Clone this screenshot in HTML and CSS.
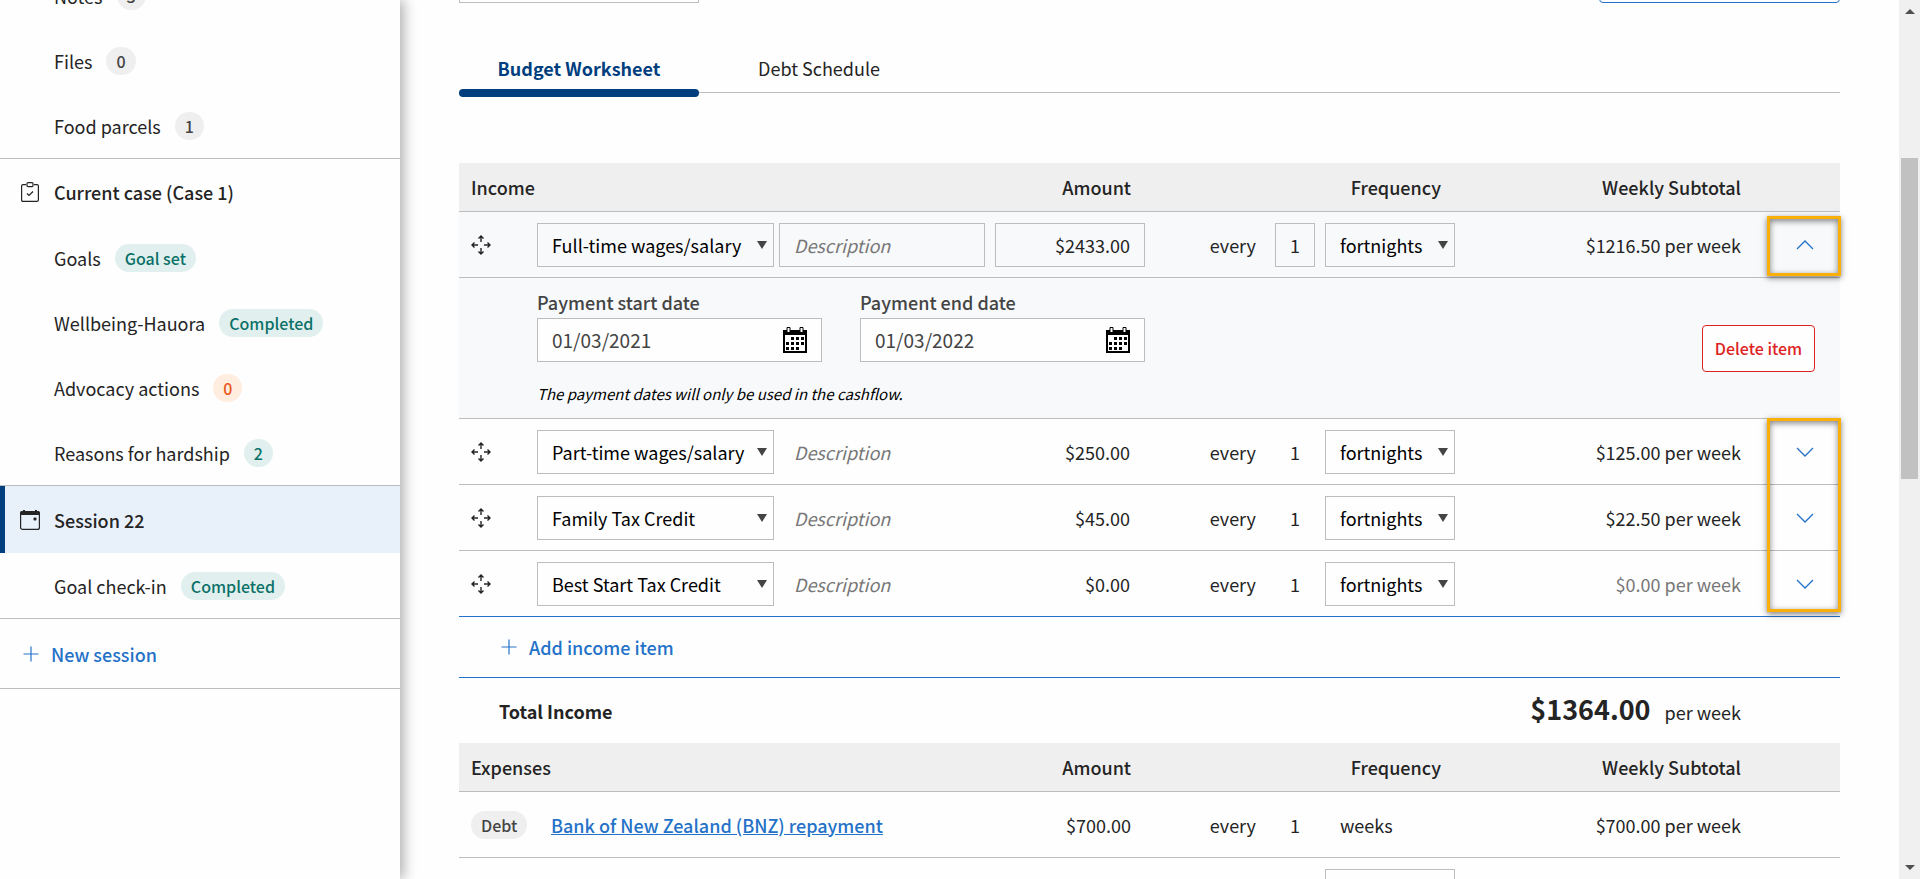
FILE: index.html
```html
<!DOCTYPE html>
<html lang="en">
<head>
    <meta charset="utf-8">
    <title>Budget Worksheet</title>
    <link rel="stylesheet" href="styles.css">
</head>
<body>
    <!-- shared icons -->
    <svg class="sprite" aria-hidden="true">
        <symbol id="move" viewBox="0 0 20 20">
            <path d="M10 7V1M7.500 3.500L10 1l2.500 2.500M10 13v6M7.500 16.500L10 19l2.500-2.500M7 10H1M3.500 7.500L1 10l2.500 2.500M13 10h6M16.500 7.500L19 10l-2.500 2.500" fill="none" stroke="currentColor" stroke-width="1.400"/>
        </symbol>
        <symbol id="plus" viewBox="0 0 16 16">
            <path d="M8 .5v15M.5 8h15" fill="none" stroke="currentColor" stroke-width="1.200"/>
        </symbol>
        <symbol id="down" viewBox="0 0 18 10">
            <path d="M1 1l8 8 8-8" fill="none" stroke="currentColor" stroke-width="1.300"/>
        </symbol>
        <symbol id="up" viewBox="0 0 18 10">
            <path d="M1 9l8-8 8 8" fill="none" stroke="currentColor" stroke-width="1.300"/>
        </symbol>
        <symbol id="calendar" viewBox="0 0 24 26">
            <path d="M1 4h22v21H1z" fill="#fff" stroke="#000" stroke-width="2"/>
            <path d="M0 3h24v5H0z"/>
            <path d="M4 .5h3v5H4zM17 .5h3v5h-3z" fill="#fff" stroke="#000"/>
            <path d="M8 10h3v3H8zM13 10h3v3h-3zM18 10h3v3h-3zM3 15h3v3H3zM8 15h3v3H8zM13 15h3v3h-3zM18 15h3v3h-3zM3 20h3v3H3zM8 20h3v3H8zM13 20h3v3h-3z"/>
        </symbol>
    </svg>

    <div class="page">
        <nav class="sidebar">
            <div class="section first">
                <a class="item" href="#">Notes <span class="badge">3</span></a>
                <a class="item" href="#">Files <span class="badge">0</span></a>
                <a class="item" href="#">Food parcels <span class="badge">1</span></a>
            </div>
            <div class="section">
                <a class="title" href="#">
                    <svg class="title-icon" viewBox="0 0 20 20" fill="none" stroke="currentColor" stroke-width="1.200">
                        <path d="M6 2.600H3A1.400 1.400 0 0 0 1.600 4v14A1.400 1.400 0 0 0 3 19.400h14a1.400 1.400 0 0 0 1.400-1.400V4A1.400 1.400 0 0 0 17 2.600h-3"/>
                        <rect x="7" y=".6" width="6" height="4" rx="1"/>
                        <path d="M7 11.500l2 2 4-4"/>
                    </svg>
                    Current case (Case 1)
                </a>
                <a class="item" href="#">Goals <span class="badge green">Goal set</span></a>
                <a class="item" href="#">Wellbeing-Hauora <span class="badge green">Completed</span></a>
                <a class="item" href="#">Advocacy actions <span class="badge orange">0</span></a>
                <a class="item" href="#">Reasons for hardship <span class="badge green">2</span></a>
            </div>
            <div class="section">
                <a class="title active" href="#">
                    <svg class="title-icon" viewBox="0 0 20 20">
                        <rect x=".6" y="1.600" width="18.800" height="17.800" rx="2" fill="none" stroke="currentColor" stroke-width="1.200"/>
                        <path d="M0 5V3a2 2 0 0 1 2-2h1V0h2v1h10V0h2v1h1a2 2 0 0 1 2 2v2z" fill="currentColor"/>
                        <rect x="13.500" y="7.500" width="3" height="3" rx="1" fill="currentColor"/>
                    </svg>
                    Session 22
                </a>
                <a class="item" href="#">Goal check-in <span class="badge green">Completed</span></a>
            </div>
            <div class="section last">
                <button class="add new-session"><svg class="plus"><use href="#plus"/></svg>New session</button>
            </div>
        </nav>

        <main class="main">
            <div class="top-bar">
                <input class="top-input" type="text" aria-label="Worksheet name">
                <button class="top-button" aria-label="Worksheet action"></button>
            </div>

            <div class="tabs">
                <a class="tab current" href="#">Budget Worksheet</a>
                <a class="tab" href="#">Debt Schedule</a>
            </div>

            <table class="budget">
                <colgroup>
                    <col class="col-drag">
                    <col>
                    <col class="col-amount">
                    <col class="col-frequency">
                    <col class="col-subtotal">
                    <col class="col-toggle">
                </colgroup>
                <thead>
                    <tr>
                        <th class="name" colspan="2">Income</th>
                        <th>Amount</th>
                        <th>Frequency</th>
                        <th class="subtotal">Weekly Subtotal</th>
                        <th></th>
                    </tr>
                </thead>
                <tbody>
                    <tr class="open">
                        <td class="drag"><svg class="move"><use href="#move"/></svg></td>
                        <td>
                            <div class="fields">
                                <select class="type" aria-label="Income type"><option>Full-time wages/salary</option></select>
                                <input class="description" type="text" placeholder="Description" aria-label="Description">
                            </div>
                        </td>
                        <td><input class="amount" type="text" value="$2433.00" aria-label="Amount"></td>
                        <td>
                            <div class="frequency">
                                <span>every</span>
                                <input class="count" type="text" value="1" aria-label="Every">
                                <select class="period" aria-label="Frequency"><option>fortnights</option></select>
                            </div>
                        </td>
                        <td class="subtotal">$1216.50 per week</td>
                        <td class="toggle">
                            <button class="chevron" aria-label="Collapse"><svg><use href="#up"/></svg></button>
                            <div class="highlight"></div>
                        </td>
                    </tr>
                    <tr class="open details">
                        <td></td>
                        <td colspan="5">
                            <div class="detail-row">
                                <div>
                                    <div class="dates">
                                        <div class="date">
                                            <label for="start">Payment start date</label>
                                            <div class="date-box">
                                                <input id="start" type="text" value="01/03/2021">
                                                <button aria-label="Pick start date"><svg><use href="#calendar"/></svg></button>
                                            </div>
                                        </div>
                                        <div class="date">
                                            <label for="end">Payment end date</label>
                                            <div class="date-box">
                                                <input id="end" type="text" value="01/03/2022">
                                                <button aria-label="Pick end date"><svg><use href="#calendar"/></svg></button>
                                            </div>
                                        </div>
                                    </div>
                                    <p class="hint">The payment dates will only be used in the cashflow.</p>
                                </div>
                                <button class="delete">Delete item</button>
                            </div>
                        </td>
                    </tr>
                    <tr>
                        <td class="drag"><svg class="move"><use href="#move"/></svg></td>
                        <td>
                            <div class="fields">
                                <select class="type" aria-label="Income type"><option>Part-time wages/salary</option></select>
                                <input class="description" type="text" placeholder="Description" aria-label="Description">
                            </div>
                        </td>
                        <td><input class="amount" type="text" value="$250.00" aria-label="Amount"></td>
                        <td>
                            <div class="frequency">
                                <span>every</span>
                                <input class="count" type="text" value="1" aria-label="Every">
                                <select class="period" aria-label="Frequency"><option>fortnights</option></select>
                            </div>
                        </td>
                        <td class="subtotal">$125.00 per week</td>
                        <td class="toggle">
                            <button class="chevron" aria-label="Expand"><svg><use href="#down"/></svg></button>
                            <div class="highlight three-rows"></div>
                        </td>
                    </tr>
                    <tr>
                        <td class="drag"><svg class="move"><use href="#move"/></svg></td>
                        <td>
                            <div class="fields">
                                <select class="type" aria-label="Income type"><option>Family Tax Credit</option></select>
                                <input class="description" type="text" placeholder="Description" aria-label="Description">
                            </div>
                        </td>
                        <td><input class="amount" type="text" value="$45.00" aria-label="Amount"></td>
                        <td>
                            <div class="frequency">
                                <span>every</span>
                                <input class="count" type="text" value="1" aria-label="Every">
                                <select class="period" aria-label="Frequency"><option>fortnights</option></select>
                            </div>
                        </td>
                        <td class="subtotal">$22.50 per week</td>
                        <td class="toggle"><button class="chevron" aria-label="Expand"><svg><use href="#down"/></svg></button></td>
                    </tr>
                    <tr class="last-item">
                        <td class="drag"><svg class="move"><use href="#move"/></svg></td>
                        <td>
                            <div class="fields">
                                <select class="type" aria-label="Income type"><option>Best Start Tax Credit</option></select>
                                <input class="description" type="text" placeholder="Description" aria-label="Description">
                            </div>
                        </td>
                        <td><input class="amount" type="text" value="$0.00" aria-label="Amount"></td>
                        <td>
                            <div class="frequency">
                                <span>every</span>
                                <input class="count" type="text" value="1" aria-label="Every">
                                <select class="period" aria-label="Frequency"><option>fortnights</option></select>
                            </div>
                        </td>
                        <td class="subtotal zero">$0.00 per week</td>
                        <td class="toggle"><button class="chevron" aria-label="Expand"><svg><use href="#down"/></svg></button></td>
                    </tr>
                    <tr class="add-row">
                        <td colspan="6"><button class="add"><svg class="plus"><use href="#plus"/></svg>Add income item</button></td>
                    </tr>
                    <tr class="total">
                        <td class="total-name" colspan="2">Total Income</td>
                        <td class="subtotal" colspan="3"><strong>$1364.00</strong> per week</td>
                        <td></td>
                    </tr>
                </tbody>
                <thead>
                    <tr>
                        <th class="name" colspan="2">Expenses</th>
                        <th>Amount</th>
                        <th>Frequency</th>
                        <th class="subtotal">Weekly Subtotal</th>
                        <th></th>
                    </tr>
                </thead>
                <tbody>
                    <tr>
                        <td class="drag"><span class="badge">Debt</span></td>
                        <td><a class="debt-link" href="#">Bank of New Zealand (BNZ) repayment</a></td>
                        <td class="amount-text">$700.00</td>
                        <td>
                            <div class="frequency">
                                <span>every</span>
                                <span class="count-text">1</span>
                                <span class="period-text">weeks</span>
                            </div>
                        </td>
                        <td class="subtotal">$700.00 per week</td>
                        <td></td>
                    </tr>
                    <tr>
                        <td colspan="3"></td>
                        <td>
                            <div class="frequency">
                                <select class="period" aria-label="Frequency"><option>weeks</option></select>
                            </div>
                        </td>
                        <td colspan="2"></td>
                    </tr>
                </tbody>
            </table>
        </main>

        <div class="scrollbar">
            <div class="arrow arrow-up"></div>
            <div class="thumb"></div>
            <div class="arrow arrow-down"></div>
        </div>
    </div>
</body>
</html>
```

FILE: styles.css
```css
* {
    box-sizing: border-box;
}

body {
    margin: 0;
    background: #fefefe;
    color: #242424;
    font-family: "Noto Sans CJK SC", "Noto Sans", sans-serif;
    font-size: 18px;
    line-height: 28px;
}

a {
    color: inherit;
    text-decoration: none;
}

input,
select,
button {
    margin: 0;
    padding: 0;
    border: none;
    background: transparent;
    color: inherit;
    font: inherit;
}

button {
    cursor: pointer;
}

.sprite {
    display: none;
}

.page {
    display: grid;
    grid-template-columns: 400px 1fr 21px;
    height: 100vh;
    overflow: hidden;
}

/* Sidebar */
.sidebar {
    position: relative;
    z-index: 1;
    background: #fefefe;
    box-shadow: 4px 0 12px rgba(0, 0, 0, 0.3);
}

.section {
    border-top: 1px solid #bdbdbd;
}

.first {
    margin-top: -37px;
    border-top: none;
}

.last {
    border-bottom: 1px solid #bdbdbd;
}

.item {
    display: flex;
    align-items: center;
    gap: 14px;
    height: 65px;
    padding-left: 54px;
}

.title {
    display: flex;
    align-items: center;
    gap: 14px;
    height: 66px;
    padding-left: 20px;
    font-weight: 500;
}

.title-icon {
    width: 20px;
    height: 20px;
}

.active {
    height: 67px;
    padding-left: 15px;
    border-left: 5px solid #003e7e;
    background: #e8f0fa;
}

.badge {
    display: inline-block;
    min-width: 28px;
    padding: 0 10px;
    border-radius: 14px;
    background: #efefef;
    color: #444;
    font-size: 16px;
    font-weight: 500;
    text-align: center;
}

.green {
    background: #e1f0ee;
    color: #0b7068;
}

.orange {
    background: #ffede0;
    color: #e8571c;
}

.add {
    display: flex;
    align-items: center;
    gap: 12px;
    color: #2472c8;
    font-weight: 500;
}

.plus {
    width: 16px;
    height: 16px;
}

.new-session {
    width: 100%;
    height: 69px;
    padding-left: 23px;
}

/* Main */
.main {
    padding: 0 59px;
    overflow: hidden;
}

.top-bar {
    display: flex;
    justify-content: space-between;
    height: 44px;
    margin-top: -41px;
}

.top-input {
    width: 240px;
    border: 1px solid #bdbdbd;
}

.top-button {
    width: 241px;
    border: 1px solid #2472c8;
    border-radius: 4px;
}

.tabs {
    display: flex;
    height: 90px;
    margin-bottom: 70px;
    border-bottom: 1px solid #bdbdbd;
}

.tab {
    position: relative;
    width: 240px;
    padding-top: 51px;
    text-align: center;
}

.current {
    color: #003e7e;
    font-weight: 700;
}

.current::after {
    content: "";
    position: absolute;
    left: 0;
    right: 0;
    bottom: -5px;
    height: 8px;
    border-radius: 4px;
    background: #003e7e;
}

.budget {
    width: 100%;
    table-layout: fixed;
    border-collapse: separate;
    border-spacing: 0;
}

.col-drag {
    width: 78px;
}

.col-amount {
    width: 150px;
}

.col-frequency {
    width: 310px;
}

.col-subtotal {
    width: 286px;
}

.col-toggle {
    width: 99px;
}

th {
    height: 49px;
    padding: 0 14px;
    border-bottom: 1px solid #bdbdbd;
    background: #efefef;
    font-weight: 500;
    text-align: right;
}

.name {
    padding-left: 12px;
    text-align: left;
}

td {
    height: 66px;
    padding: 0;
    border-bottom: 1px solid #bdbdbd;
}

.subtotal {
    padding: 0;
    text-align: right;
}

.zero {
    color: #777;
}

.open td {
    background: #f7f9fb;
}

.drag {
    padding-left: 12px;
}

.move {
    display: block;
    width: 20px;
    height: 20px;
}

.fields {
    display: flex;
    gap: 5px;
    padding-right: 10px;
}

select {
    height: 44px;
    padding-left: 14px;
    border: 1px solid #bdbdbd;
    color: #000;
    appearance: none;
    background: url("data:image/svg+xml,%3Csvg xmlns='http://www.w3.org/2000/svg' width='10' height='8'%3E%3Cpath d='M0 0h10L5 8z' fill='%23444'/%3E%3C/svg%3E") no-repeat right 6px center;
}

.type {
    width: 237px;
}

.description,
.amount,
.count {
    height: 44px;
    border: 1px solid transparent;
}

.open .description,
.open .amount,
.open .count {
    border-color: #bdbdbd;
}

.description {
    flex: 1;
    min-width: 0;
    padding-left: 14px;
}

.description::placeholder {
    color: #777;
    font-style: italic;
}

.amount {
    width: 100%;
    padding-right: 14px;
    text-align: right;
}

.amount-text {
    padding-right: 14px;
    text-align: right;
}

.frequency {
    display: flex;
    align-items: center;
    justify-content: flex-end;
    gap: 10px;
}

.frequency span:first-child {
    margin-right: 9px;
}

.count,
.count-text {
    width: 40px;
    text-align: center;
}

.period,
.period-text {
    width: 130px;
}

.period-text {
    padding-left: 15px;
}

.toggle {
    position: relative;
}

.chevron {
    display: flex;
    align-items: center;
    justify-content: center;
    width: 44px;
    height: 44px;
    margin: 0 13px 0 auto;
    color: #2472c8;
}

.chevron svg {
    width: 18px;
    height: 10px;
}

.highlight {
    position: absolute;
    z-index: 1;
    top: 4px;
    right: -1px;
    width: 74px;
    height: 60px;
    border: 3px solid #f9ae08;
    box-shadow: 0 2px 6px rgba(0, 0, 0, 0.5), inset 0 2px 6px rgba(0, 0, 0, 0.5);
    pointer-events: none;
}

.three-rows {
    top: -1px;
    height: 194px;
}

/* Expanded item */
.details td {
    height: 141px;
}

.detail-row {
    display: flex;
    align-items: center;
    justify-content: space-between;
    padding-right: 25px;
}

.dates {
    display: flex;
    gap: 38px;
}

.date {
    width: 285px;
}

.date label {
    display: block;
    margin-bottom: 2px;
    color: #444;
    font-weight: 500;
}

.date-box {
    display: flex;
    align-items: center;
    height: 44px;
    padding: 0 14px;
    border: 1px solid #bdbdbd;
    background: #fefefe;
    color: #444;
}

.date-box input {
    flex: 1;
    min-width: 0;
    font-size: 19px;
}

.date-box svg {
    display: block;
    width: 24px;
    height: 26px;
}

.hint {
    margin: 18px 0 0;
    color: #000;
    font-size: 15px;
    font-style: italic;
}

.delete {
    width: 113px;
    height: 47px;
    border: 1px solid #dd2222;
    border-radius: 4px;
    background: #fefefe;
    color: #dd2222;
    font-size: 16px;
    font-weight: 500;
}

.last-item td,
.add-row td {
    border-bottom-color: #2472c8;
}

.add-row td {
    height: 61px;
    padding-left: 42px;
}

.total td {
    height: 65px;
    border-bottom: none;
}

.total .total-name {
    padding-left: 40px;
    font-weight: 700;
}

.total strong {
    margin-right: 10px;
    font-size: 27px;
}

.debt-link {
    padding-left: 14px;
    color: #2472c8;
    font-weight: 500;
    text-decoration: underline;
}

/* Scrollbar */
.scrollbar {
    display: flex;
    flex-direction: column;
    align-items: center;
    padding: 9px 0;
    background: #f0f0f0;
}

.arrow {
    border: 5px solid transparent;
}

.arrow-up {
    border-top: none;
    border-bottom-color: #505050;
}

.arrow-down {
    margin-top: auto;
    border-bottom: none;
    border-top-color: #505050;
}

.thumb {
    width: 17px;
    height: 321px;
    margin-top: 144px;
    background: #c1c1c1;
}
```
